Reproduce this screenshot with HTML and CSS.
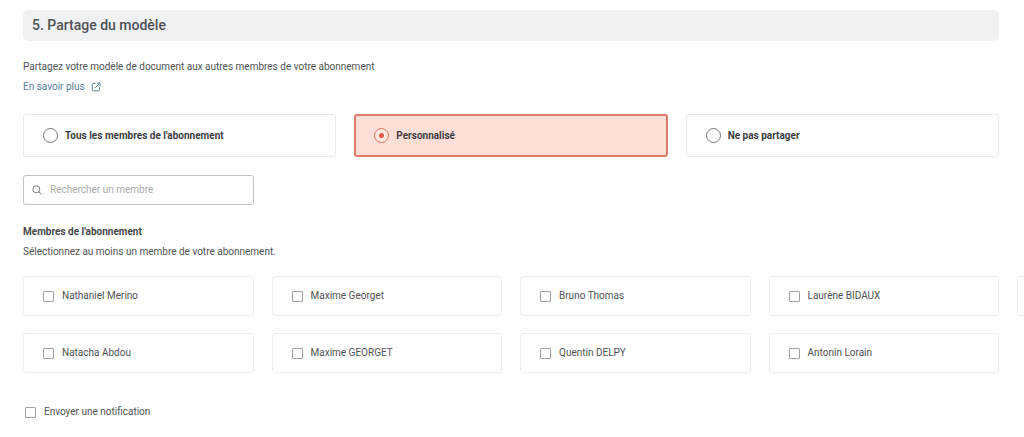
FILE: index.html
```html
<!DOCTYPE html>
<html lang="fr">
<head>
<meta charset="utf-8">
<meta name="viewport" content="width=device-width, initial-scale=1">
<title>Partage du modèle</title>
<link rel="stylesheet" href="styles.css">
</head>
<body>
<main class="page">
  <h2 class="section-title">5. Partage du modèle</h2>

  <div class="intro">
    <p class="text">Partagez votre modèle de document aux autres membres de votre abonnement</p>
    <a class="link" href="#">En savoir plus
      <svg class="link-icon" viewBox="0 0 10 10" aria-hidden="true"><path d="M4.500 1.500H2.200Q1.200 1.500 1.200 2.500V7.800Q1.200 8.800 2.200 8.800H7.500Q8.500 8.800 8.500 7.800V5.500M6 1H9V4M9 1L4.300 5.700"/></svg>
    </a>
  </div>

  <div class="options" role="radiogroup" aria-label="Partage du modèle">
    <label class="option"><input class="radio" type="radio" name="share"><span>Tous les membres de l'abonnement</span></label>
    <label class="option option-selected"><input class="radio" type="radio" name="share" checked><span>Personnalisé</span></label>
    <label class="option"><input class="radio" type="radio" name="share"><span>Ne pas partager</span></label>
  </div>

  <label class="search">
    <svg class="search-icon" viewBox="0 0 10 10" aria-hidden="true"><circle cx="4.300" cy="4.300" r="3.500"/><path d="M6.800 6.800L9.500 9.500"/></svg>
    <input class="search-input" type="text" placeholder="Rechercher un membre" aria-label="Rechercher un membre">
  </label>

  <div class="members-head">
    <h3 class="subtitle">Membres de l'abonnement</h3>
    <p class="text">Sélectionnez au moins un membre de votre abonnement.</p>
  </div>

  <div class="members">
    <label class="member"><input class="check" type="checkbox"><span>Nathaniel Merino</span></label>
    <label class="member"><input class="check" type="checkbox"><span>Natacha Abdou</span></label>
    <label class="member"><input class="check" type="checkbox"><span>Maxime Georget</span></label>
    <label class="member"><input class="check" type="checkbox"><span>Maxime GEORGET</span></label>
    <label class="member"><input class="check" type="checkbox"><span>Bruno Thomas</span></label>
    <label class="member"><input class="check" type="checkbox"><span>Quentin DELPY</span></label>
    <label class="member"><input class="check" type="checkbox"><span>Laurène BIDAUX</span></label>
    <label class="member"><input class="check" type="checkbox"><span>Antonin Lorain</span></label>
    <div class="member" aria-hidden="true"></div>
  </div>

  <label class="notify"><input class="check" type="checkbox"><span>Envoyer une notification</span></label>
</main>
</body>
</html>
```

FILE: styles.css
```css
* {
  box-sizing: border-box;
}

body {
  margin: 0;
  background: #fff;
  color: #505255;
  font-family: Roboto, "Liberation Sans", sans-serif;
  font-size: 10px;
  line-height: 20px;
}

.page {
  padding: 10px 25px 15px 23px;
}

.section-title {
  margin: 0;
  padding: 5px 9px;
  border-radius: 5px;
  background: #f0f1f3;
  color: #505255;
  font-size: 14px;
  font-weight: 500;
  line-height: 21px;
}

.intro {
  margin: 16px 0 17px;
}

.text {
  margin: 0;
}

.link {
  display: flex;
  align-items: center;
  gap: 6px;
  width: fit-content;
  color: #57809f;
  text-decoration: none;
}

.link-icon {
  width: 10px;
  height: 10px;
  fill: none;
  stroke: currentColor;
  stroke-width: 1;
}

.options {
  display: grid;
  grid-template-columns: repeat(3, 1fr);
  gap: 18px;
}

.option {
  display: flex;
  align-items: center;
  gap: 7px;
  height: 43px;
  padding: 0 19px;
  border: 1px solid #e9e9ea;
  border-radius: 3px;
  color: #3d3d3f;
  font-weight: 700;
}

.option-selected {
  padding: 0 18px;
  border: 2px solid #dc7c69;
  background: #ffded8;
}

.radio {
  appearance: none;
  display: grid;
  place-items: center;
  width: 15px;
  height: 15px;
  margin: 0;
  border: 1px solid #77787a;
  border-radius: 50%;
  background: #fff;
}

.radio:checked {
  border-color: #e07460;
  background: #ffe8df;
}

.radio:checked::before {
  content: "";
  width: 5px;
  height: 5px;
  border-radius: 50%;
  background: #ec5a40;
}

.search {
  display: flex;
  align-items: center;
  gap: 8px;
  width: calc((100% - 54px) / 4);
  height: 30px;
  margin: 18px 0 17px;
  padding: 0 8px;
  border: 1px solid #c3c4c6;
  border-radius: 3px;
}

.search-icon {
  flex: none;
  width: 10px;
  height: 10px;
  fill: none;
  stroke: #77797c;
  stroke-width: 1;
}

.search-input {
  flex: 1;
  min-width: 0;
  padding: 0;
  border: 0;
  outline: 0;
  background: transparent;
  color: inherit;
  font: inherit;
}

.search-input::placeholder {
  color: #aaabad;
  opacity: 1;
}

.subtitle {
  margin: 0;
  color: #47484a;
  font-size: 10px;
  font-weight: 700;
}

/* The strip bleeds to the window's right edge, where the next column starts. */
.members {
  display: grid;
  grid-template-rows: repeat(2, 40px);
  grid-auto-flow: column;
  grid-auto-columns: calc((100% - 79px) / 4);
  gap: 17px 18px;
  margin: 14px -25px 29px 0;
  overflow: hidden;
}

.member {
  display: flex;
  align-items: center;
  gap: 8px;
  padding: 0 19px;
  border: 1px solid #ececed;
  border-radius: 3px;
}

.check {
  appearance: none;
  width: 11px;
  height: 11px;
  margin: 0;
  border: 1px solid #a0a1a3;
  border-radius: 1px;
  background: #fff;
}

.notify {
  display: flex;
  align-items: center;
  gap: 8px;
  width: fit-content;
  padding: 0 2px;
}
```
